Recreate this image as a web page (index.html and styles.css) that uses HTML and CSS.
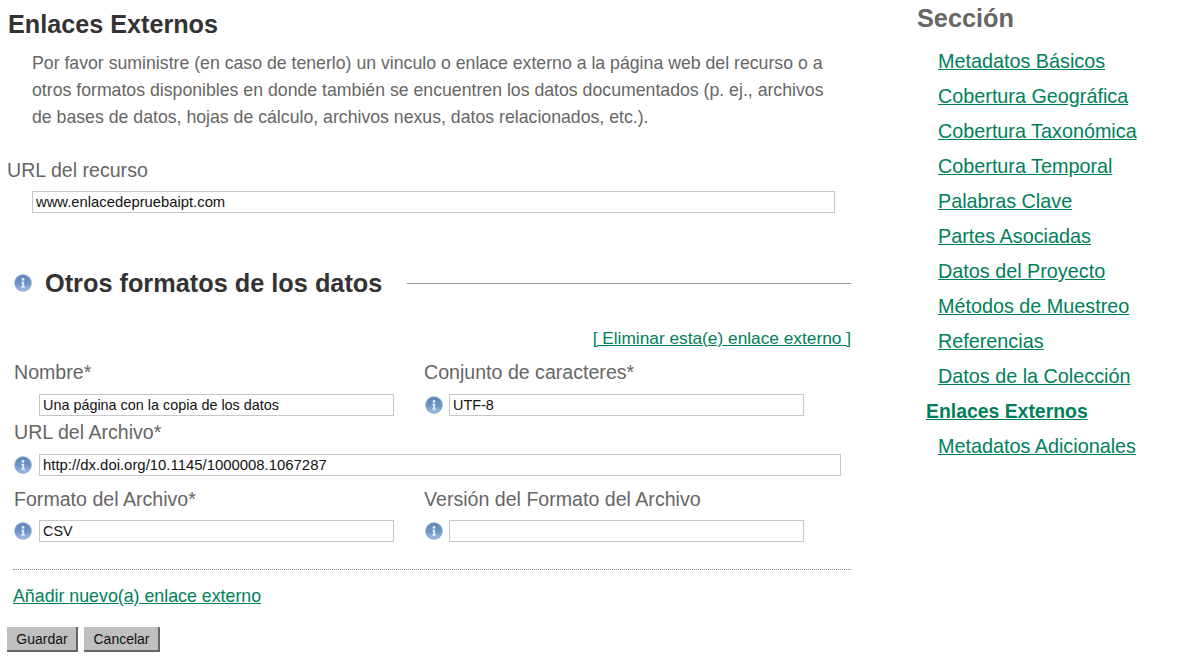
FILE: index.html
```html
<!DOCTYPE html>
<html lang="es">
<head>
<meta charset="utf-8">
<title>Enlaces Externos</title>
<link rel="stylesheet" href="styles.css">
</head>
<body>
<svg class="defs" width="0" height="0" aria-hidden="true">
  <defs>
    <linearGradient id="ig" x1="0" y1="0" x2="0" y2="1">
      <stop offset="0" stop-color="#5d84b8"/>
      <stop offset="0.55" stop-color="#6f96c8"/>
      <stop offset="1" stop-color="#a3c0e2"/>
    </linearGradient>
    <symbol id="info" viewBox="0 0 18 18">
      <circle cx="9" cy="9" r="9" fill="#c3d2e4"/>
      <circle cx="9" cy="9" r="8" fill="url(#ig)" stroke="#7194c0" stroke-width="0.6"/>
      <circle cx="9" cy="5.4" r="1.4" fill="#e8eef6"/>
      <path d="M7.3 7.8h2.8v4.7h1v1.2H7.2v-1.2h1V9h-.9z" fill="#e8eef6"/>
    </symbol>
  </defs>
</svg>
<div class="page">
  <main class="main">
    <h1 class="title">Enlaces Externos</h1>
    <p class="intro">Por favor suministre (en caso de tenerlo) un vinculo o enlace externo a la página web del recurso o a otros formatos disponibles en donde también se encuentren los datos documentados (p. ej., archivos de bases de datos, hojas de cálculo, archivos nexus, datos relacionados, etc.).</p>
    <label class="label url-label">URL del recurso</label>
    <div class="url-row"><input class="input input-url" value="www.enlacedepruebaipt.com"></div>

    <div class="sub-head">
      <svg class="icon"><use href="#info"/></svg>
      <h2 class="sub-title">Otros formatos de los datos</h2>
      <span class="rule"></span>
    </div>

    <div class="remove-row"><a class="link" href="#">[ Eliminar esta(e) enlace externo ]</a></div>

    <div class="form">
      <div class="row">
        <div class="field">
          <label class="label">Nombre*</label>
          <div class="control"><span class="icon-gap"></span><input class="input input-half" value="Una página con la copia de los datos"></div>
        </div>
        <div class="field">
          <label class="label">Conjunto de caracteres*</label>
          <div class="control"><svg class="icon"><use href="#info"/></svg><input class="input input-half" value="UTF-8"></div>
        </div>
      </div>
      <div class="field field-url">
        <label class="label">URL del Archivo*</label>
        <div class="control"><svg class="icon"><use href="#info"/></svg><input class="input input-full" value="http://dx.doi.org/10.1145/1000008.1067287"></div>
      </div>
      <div class="row row-last">
        <div class="field">
          <label class="label">Formato del Archivo*</label>
          <div class="control"><svg class="icon"><use href="#info"/></svg><input class="input input-half" value="CSV"></div>
        </div>
        <div class="field">
          <label class="label">Versión del Formato del Archivo</label>
          <div class="control"><svg class="icon"><use href="#info"/></svg><input class="input input-half" value=""></div>
        </div>
      </div>
    </div>

    <div class="dotted"></div>
    <a class="link add-link" href="#">Añadir nuevo(a) enlace externo</a>
    <div class="buttons">
      <button class="btn" type="button">Guardar</button>
      <button class="btn" type="button">Cancelar</button>
    </div>
  </main>
  <aside class="side">
    <h2 class="side-title">Sección</h2>
    <ul class="nav">
      <li><a class="link" href="#">Metadatos Básicos</a></li>
      <li><a class="link" href="#">Cobertura Geográfica</a></li>
      <li><a class="link" href="#">Cobertura Taxonómica</a></li>
      <li><a class="link" href="#">Cobertura Temporal</a></li>
      <li><a class="link" href="#">Palabras Clave</a></li>
      <li><a class="link" href="#">Partes Asociadas</a></li>
      <li><a class="link" href="#">Datos del Proyecto</a></li>
      <li><a class="link" href="#">Métodos de Muestreo</a></li>
      <li><a class="link" href="#">Referencias</a></li>
      <li><a class="link" href="#">Datos de la Colección</a></li>
      <li class="current"><a class="link" href="#">Enlaces Externos</a></li>
      <li><a class="link" href="#">Metadatos Adicionales</a></li>
    </ul>
  </aside>
</div>
</body>
</html>
```
FILE: styles.css
```css
* { box-sizing: border-box; }
html, body { margin: 0; padding: 0; }
body {
  background: #fff;
  color: #666;
  font-family: "Liberation Sans", Arial, sans-serif;
  overflow: hidden;
}
.defs { position: absolute; }
.page { display: flex; height: 661px; }
.main { width: 851px; padding-top: 10px; flex: none; }
.title {
  margin: 0 0 0 8px;
  font-size: 25.2px;
  line-height: 28px;
  font-weight: bold;
  color: #333;
}
.intro {
  margin: 12px 0 0 32px;
  width: 800px;
  font-size: 17.7px;
  line-height: 27px;
  color: #666;
}
.label { display: block; font-size: 19.6px; line-height: 22px; color: #666; }
.url-label { margin: 28px 0 0 7px; }
.url-row { margin: 10px 0 0 32px; }
.input {
  display: block;
  height: 22px;
  padding: 0 3px;
  border: 1px solid #c8c8c8;
  background: #fff;
  color: #111;
  font-family: "Liberation Sans", Arial, sans-serif;
  font-size: 14.4px;
  outline: none;
  border-radius: 0;
}
.input-url { width: 803px; font-size: 14.8px; }
.input-half { width: 355px; }
.input-full { width: 802px; font-size: 14.9px; }
.sub-head { display: flex; align-items: center; margin: 55px 0 0 14px; height: 30px; }
.sub-title {
  margin: 0 25px 0 13px;
  font-size: 25.3px;
  line-height: 30px;
  font-weight: bold;
  color: #333;
}
.rule { flex: 1; border-top: 1px solid #999; }
.icon { width: 18px; height: 18px; flex: none; display: block; }
.remove-row { margin-top: 29px; text-align: right; font-size: 17.3px; line-height: 22px; }
.link { color: #00805a; text-decoration: underline; }
.form { margin: 12px 0 0 14px; display: flex; flex-direction: column; }
.row { display: flex; }
.row .field { width: 410px; }
.field-url { margin-top: 5px; }
.row-last { margin-top: 12px; }
.row-last .control { margin-top: 10px; }
.control { display: flex; align-items: center; gap: 7px; margin-top: 11px; }
.row .field + .field .control { gap: 6px; }
.row .field + .field .icon { margin-left: 1px; }
.icon-gap { width: 18px; flex: none; }
.dotted { margin: 27px 0 0 13px; border-top: 1px dotted #888; }
.add-link { display: inline-block; margin: 15px 0 0 13px; font-size: 17.8px; line-height: 22px; }
.buttons { display: flex; gap: 6px; margin: 20px 0 0 7px; }
.btn {
  width: 71px;
  height: 25px;
  padding: 0 0 0 1px;
  background: #bfbfbf;
  border: none;
  border-right: 2px solid #666;
  border-bottom: 2px solid #666;
  color: #111;
  font-family: "Liberation Sans", Arial, sans-serif;
  font-size: 14px;
}
.btn + .btn { width: 76px; }
.side { margin-left: 66px; padding-top: 3px; flex: 1; }
.side-title { margin: 0; font-size: 25.3px; line-height: 30px; font-weight: bold; color: #666; }
.nav { list-style: none; margin: 11px 0 0; padding: 0 0 0 21px; font-size: 19.8px; }
.nav li { height: 35px; line-height: 35px; }
.nav .current { margin-left: -12px; font-weight: bold; font-size: 19.4px; }
```
